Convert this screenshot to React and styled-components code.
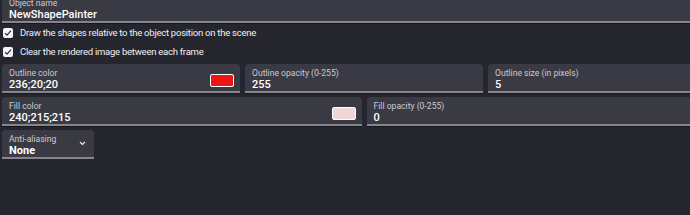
import React from 'react';
import styled, { createGlobalStyle } from 'styled-components';

const GlobalStyle = createGlobalStyle`
  html, body {
    margin: 0;
    padding: 0;
    background: #25252e;
    overflow: hidden;
  }
  body {
    font-family: Roboto, "Noto Sans", sans-serif;
    color: #f2f2f4;
  }
`;

const Page = styled.div`
  width: 724px;
  margin-left: 2px;
  display: flex;
  flex-direction: column;
`;

const Field = styled.div`
  position: relative;
  box-sizing: border-box;
  height: 29px;
  padding: 3px 7px 0 7px;
  background: #3a3a44;
  border-radius: 4px 4px 0 0;
  border-bottom: 2px solid #85858b;
  box-shadow: 0 1px 0 #17171c;
  display: flex;
  align-items: center;
  flex: ${(p) => p.grow || 1};
  min-width: 0;
`;

const FieldText = styled.div`
  display: flex;
  flex-direction: column;
  flex: 1;
  min-width: 0;
`;

const Label = styled.span`
  font-size: 8.6px;
  line-height: 10px;
  color: #cacace;
`;

const Value = styled.span`
  font-size: 11px;
  line-height: 13px;
  font-weight: 500;
  color: #ffffff;
`;

const TopField = styled(Field)`
  margin-top: -5px;
`;

const Checks = styled.div`
  display: flex;
  flex-direction: column;
`;

const CheckRow = styled.label`
  display: flex;
  align-items: center;
  gap: 7px;
  height: 19px;
  padding-left: 1px;
  font-size: 9.5px;
  letter-spacing: -0.25px;
  color: #f0f0f2;
`;

const Box = styled.span`
  width: 10px;
  height: 10px;
  border-radius: 2px;
  background: #f4f4f6;
  display: flex;
  align-items: center;
  justify-content: center;
`;

const Row = styled.div`
  display: flex;
  gap: 5px;
  margin-top: ${(p) => p.top || 4}px;
`;

const Swatch = styled.span`
  width: 22px;
  height: 11px;
  border: 1px solid #ffffff;
  border-radius: 2px;
  background: ${(p) => p.color};
  margin-right: -1px;
  margin-top: 2px;
`;

const SelectField = styled(Field)`
  flex: none;
  width: 92px;
`;

const SelectValue = styled(Value)`
  font-weight: 700;
`;

const Check = () => (
  <svg width="8" height="8" viewBox="0 0 8 8">
    <path d="M1 4.2 L3 6.2 L7 1.6" fill="none" stroke="#2b2b34" strokeWidth="1.2" />
  </svg>
);

const Chevron = () => (
  <svg width="7" height="5" viewBox="0 0 7 5" style={{ marginRight: 1, marginTop: -4 }}>
    <path d="M1 1 L3.5 3.5 L6 1" fill="none" stroke="#e8e8ea" strokeWidth="1.2" />
  </svg>
);

function App() {
  return (
    <>
      <GlobalStyle />
      <Page>
        <TopField>
          <FieldText>
            <Label>Object name</Label>
            <Value>NewShapePainter</Value>
          </FieldText>
        </TopField>

        <Checks>
          <CheckRow>
            <Box><Check /></Box>
            Draw the shapes relative to the object position on the scene
          </CheckRow>
          <CheckRow>
            <Box><Check /></Box>
            Clear the rendered image between each frame
          </CheckRow>
        </Checks>

        <Row top={3}>
          <Field>
            <FieldText>
              <Label>Outline color</Label>
              <Value>236;20;20</Value>
            </FieldText>
            <Swatch color="#ec1414" />
          </Field>
          <Field>
            <FieldText>
              <Label>Outline opacity (0-255)</Label>
              <Value>255</Value>
            </FieldText>
          </Field>
          <Field>
            <FieldText>
              <Label>Outline size (in pixels)</Label>
              <Value>5</Value>
            </FieldText>
          </Field>
        </Row>

        <Row>
          <Field>
            <FieldText>
              <Label>Fill color</Label>
              <Value>240;215;215</Value>
            </FieldText>
            <Swatch color="#f0d7d7" />
          </Field>
          <Field>
            <FieldText>
              <Label>Fill opacity (0-255)</Label>
              <Value>0</Value>
            </FieldText>
          </Field>
        </Row>

        <Row>
          <SelectField>
            <FieldText>
              <Label>Anti-aliasing</Label>
              <SelectValue>None</SelectValue>
            </FieldText>
            <Chevron />
          </SelectField>
        </Row>
      </Page>
    </>
  );
}

export default App;
